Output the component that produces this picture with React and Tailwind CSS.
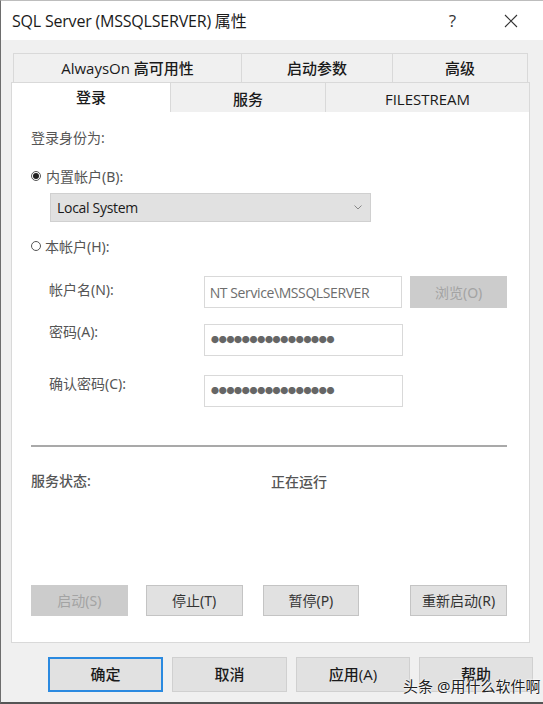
import React from 'react';

const ui = { fontFamily: '"Open Sans", "Noto Sans CJK SC", sans-serif' };
const cjk = { fontFamily: '"Noto Sans", "Noto Sans CJK SC", sans-serif' };

function Radio({ checked }) {
  return (
    <span className="w-[10px] h-[10px] rounded-full border border-[#555] bg-white flex items-center justify-center shrink-0">
      {checked && <span className="w-[6px] h-[6px] rounded-full bg-[#222]" />}
    </span>
  );
}

function Tab({ label, w, active, row }) {
  return (
    <div
      className={`h-full flex items-center justify-center border-[#d9d9d9] border-t border-r first:border-l text-[15px] font-medium text-[#1a1a1a] ${
        active ? 'bg-white' : 'bg-[#f0f0f0]'
      } ${row === 2 && !active ? 'pt-[4px]' : ''}`}
      style={{ width: w }}
    >
      {label}
    </div>
  );
}

function Btn({ label, disabled, className = '' }) {
  return (
    <div
      className={`h-[31px] w-[97px] flex items-center justify-center text-[14px] border ${
        disabled ? 'bg-[#cccccc] border-[#cccccc] text-[#a3a3a3]' : 'bg-[#e1e1e1] border-[#c4c4c4] text-[#333]'
      } ${className}`}
    >
      {label}
    </div>
  );
}

const dots = '●●●●●●●●●●●●●●●●';

export default function App() {
  return (
    <div className="w-[543px] h-[704px] bg-[#f0f0f0] border-l border-l-[#6d6d6d] border-b-2 border-b-[#555] border-t border-t-[#bdbdbd] flex flex-col relative overflow-hidden" style={ui}>
      {/* Title bar */}
      <div className="h-[39px] bg-white flex items-center pl-[11px] shrink-0">
        <span className="text-[16px] text-[#1a1a1a] tracking-[-0.2px]">SQL Server (MSSQLSERVER) 属性</span>
        <span className="ml-auto text-[17px] text-[#333] mr-[48px]">?</span>
        <svg width="14" height="14" viewBox="0 0 14 14" className="mr-[25px]">
          <path d="M1 1 L13 13 M13 1 L1 13" stroke="#333" strokeWidth="1.1" />
        </svg>
      </div>

      <div className="pl-[10px] pt-[13px] flex flex-col">
        {/* Tabs row 1 */}
        <div className="flex h-[29px] ml-[2px]">
          <Tab label="AlwaysOn 高可用性" w={229} />
          <Tab label="启动参数" w={151} />
          <Tab label="高级" w={135} />
        </div>
        {/* Tabs row 2 */}
        <div className="flex h-[30px]">
          <Tab label="登录" w={160} active row={2} />
          <Tab label="服务" w={155} row={2} />
          <Tab label="FILESTREAM" w={204} row={2} />
        </div>

        {/* Panel */}
        <div className="w-[519px] h-[531px] bg-white border border-t-0 border-[#d9d9d9] pl-[19px] pr-[22px] flex flex-col text-[14px] text-[#555]" style={cjk}>
          <div className="h-[20px] mt-[15px] flex items-center">登录身份为:</div>
          <div className="h-[20px] mt-[19px] flex items-center gap-[5px]">
            <Radio checked />
            <span>内置帐户(B):</span>
          </div>
          <div className="mt-[7px] ml-[19px] w-[321px] h-[29px] bg-[#e1e1e1] border border-[#d0d0d0] flex items-center pl-[6px] pr-[8px] text-[#1a1a1a]" style={ui}>
            <span className="tracking-[-0.3px]">Local System</span>
            <svg width="8" height="5" viewBox="0 0 8 5" className="ml-auto">
              <path d="M0.5 0.5 L4 4 L7.5 0.5" fill="none" stroke="#888" strokeWidth="1" />
            </svg>
          </div>
          <div className="h-[20px] mt-[14px] flex items-center gap-[4px]">
            <Radio />
            <span>本帐户(H):</span>
          </div>

          <div className="mt-[20px] flex items-center h-[32px]">
            <span className="w-[173px] pl-[18px] -mt-[6px]">帐户名(N):</span>
            <div className="w-[199px] h-[32px] border border-[#d9d9d9] flex items-center pl-[5px] text-[#6d6d6d] tracking-[-0.4px]" style={ui}>
              NT Service\MSSQLSERVER
            </div>
            <div className="ml-[8px] w-[97px] h-[32px] bg-[#cccccc] flex items-center justify-center text-[#a3a3a3]">浏览(O)</div>
          </div>
          <div className="mt-[16px] flex items-center h-[32px]">
            <span className="w-[173px] pl-[18px] -mt-[18px]">密码(A):</span>
            <div className="w-[199px] h-[32px] border border-[#d9d9d9] flex items-center pl-[6px] text-[#666] text-[8px] tracking-[-0.3px]">{dots}</div>
          </div>
          <div className="mt-[19px] flex items-center h-[32px]">
            <span className="w-[173px] pl-[18px] -mt-[16px]">确认密码(C):</span>
            <div className="w-[199px] h-[32px] border border-[#d9d9d9] flex items-center pl-[6px] text-[#666] text-[8px] tracking-[-0.3px]">{dots}</div>
          </div>

          <div className="mt-[38px] h-[2px] bg-[#a9a9a9]" />

          <div className="mt-[23px] flex items-center h-[20px] font-medium">
            <span className="w-[240px]">服务状态:</span>
            <span className="mt-[3px]">正在运行</span>
          </div>

          <div className="mt-[95px] flex items-center">
            <Btn label="启动(S)" disabled />
            <Btn label="停止(T)" className="ml-[18px]" />
            <Btn label="暂停(P)" className="ml-[20px]" />
            <Btn label="重新启动(R)" className="ml-[51px]" />
          </div>
        </div>

        {/* Dialog buttons */}
        <div className="mt-[14px] flex items-center pl-[37px] gap-[9px] text-[15px] text-[#1a1a1a] font-medium">
          <div className="w-[115px] h-[35px] bg-[#e1e1e1] border-2 border-[#2b8ae0] flex items-center justify-center">确定</div>
          <div className="w-[115px] h-[35px] bg-[#e1e1e1] border border-[#d0d0d0] flex items-center justify-center">取消</div>
          <div className="w-[114px] h-[35px] bg-[#e1e1e1] border border-[#d0d0d0] flex items-center justify-center">应用(A)</div>
          <div className="w-[114px] h-[35px] bg-[#e1e1e1] border border-[#d0d0d0] flex items-center justify-center">帮助</div>
        </div>
      </div>

      {/* watermark */}
      <div className="absolute left-[402px] top-[674px] text-[15px] text-[#222] [text-shadow:0_0_2px_#fff,0_0_2px_#fff,0_0_1px_#fff]" style={cjk}>
        头条 @用什么软件啊
      </div>
    </div>
  );
}
